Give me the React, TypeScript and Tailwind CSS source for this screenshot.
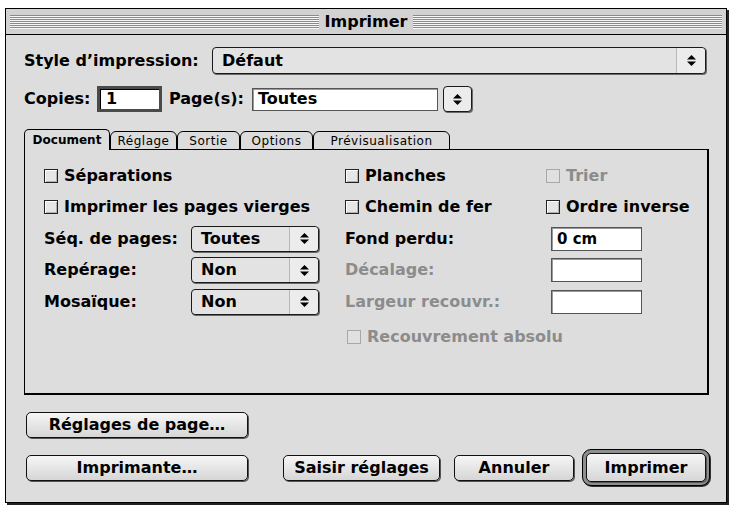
import React from 'react';

function Arrows() {
  return (
    <svg width="9" height="13" viewBox="0 0 9 13">
      <polygon points="0,5.5 4.5,1 9,5.5" fill="#000" />
      <polygon points="0,7.5 4.5,12 9,7.5" fill="#000" />
    </svg>
  );
}

function Stripes() {
  return (
    <div className="flex-1 flex flex-col gap-[1px]">
      {[0, 1, 2, 3, 4, 5, 6].map((i) => (
        <div key={i} className="h-px bg-[#8a8a8a] shadow-[0_1px_0_#f8f8f8]" />
      ))}
    </div>
  );
}

function Popup({ label, className }: { label: string; className: string }) {
  return (
    <div className={`flex rounded-[4px] border border-[#1a1a1a] bg-[#e3e3e3] shadow-[1px_1px_0_#6a6a6a] ${className}`}>
      <div className="flex-1 flex items-center pl-[9px] text-[16px] font-bold">{label}</div>
      <div className="w-[29px] flex items-center justify-center border-l border-[#b8b8b8] bg-[#ececec] rounded-r-[4px]">
        <Arrows />
      </div>
    </div>
  );
}

function Check({ label, disabled }: { label: string; disabled?: boolean }) {
  return (
    <div className="flex items-center gap-[6px] whitespace-nowrap">
      <div
        className={
          disabled
            ? 'w-[14px] h-[14px] border border-[#a8a8a8] bg-[#e0e0e0]'
            : 'w-[14px] h-[14px] border border-[#222] bg-[#e6e6e6] shadow-[inset_1px_1px_0_#fff,inset_-1px_-1px_0_#b0b0b0]'
        }
      />
      <span className={disabled ? 'text-[16px] font-bold text-[#8c8c8c]' : 'text-[16px] font-bold'}>{label}</span>
    </div>
  );
}

function Field({ value, className }: { value?: string; className: string }) {
  return (
    <div className={`flex items-center pl-[5px] bg-white border border-[#555] shadow-[inset_1px_1px_0_#999] text-[15px] font-bold ${className}`}>
      {value}
    </div>
  );
}

function Btn({ label, className }: { label: string; className: string }) {
  return (
    <div
      className={`h-[26px] flex items-center justify-center rounded-[5px] border border-[#111] bg-linear-to-b from-[#f6f6f6] to-[#d6d6d6] shadow-[1px_1px_0_#555] text-[16px] font-bold ${className}`}
    >
      {label}
    </div>
  );
}

const tabs = [
  { label: 'Réglage', w: 'w-[67px]' },
  { label: 'Sortie', w: 'w-[63px]' },
  { label: 'Options', w: 'w-[73px]' },
  { label: 'Prévisualisation', w: 'w-[137px]' },
];

export default function App() {
  return (
    <div className="w-[734px] h-[509px] bg-white pt-[8px] pl-[5px] font-['DejaVu_Sans',sans-serif] text-black">
      <div className="w-[722px] h-[495px] border border-black bg-[#dddddd] shadow-[2px_2px_0_#222] flex flex-col">
        {/* Title bar */}
        <div className="h-[26px] flex items-center gap-[6px] px-[4px] bg-[#d2d2d2] border-b border-black">
          <Stripes />
          <span className="text-[16px] font-bold leading-none">Imprimer</span>
          <Stripes />
        </div>

        <div className="flex flex-col pl-[18px]">
          {/* Style */}
          <div className="mt-[12px] h-[27px] flex items-center">
            <span className="w-[188px] text-[16px] font-bold">Style d’impression:</span>
            <Popup label="Défaut" className="w-[494px] h-[27px]" />
          </div>

          {/* Copies / Pages */}
          <div className="mt-[12px] h-[26px] flex items-center">
            <span className="w-[73px] text-[16px] font-bold">Copies:</span>
            <div className="w-[65px] h-[26px] flex items-center pl-[6px] bg-white border-[3px] border-[#4a4a4a] shadow-[inset_1px_1px_0_#000] text-[16px] font-bold">
              1
            </div>
            <span className="ml-[7px] w-[83px] text-[16px] font-bold">Page(s):</span>
            <div className="w-[186px] h-[23px] flex items-center pl-[5px] bg-white border border-[#555] shadow-[inset_1px_1px_0_#999] text-[16px] font-bold">
              Toutes
            </div>
            <div className="ml-[5px] w-[29px] h-[26px] flex items-center justify-center rounded-[4px] border border-[#1a1a1a] bg-[#ececec] shadow-[1px_1px_0_#6a6a6a]">
              <Arrows />
            </div>
          </div>

          {/* Tabs */}
          <div className="mt-[18px] h-[20px] flex items-end -mb-px relative z-10">
            <div className="w-[86px] h-[21px] flex items-center justify-center rounded-t-[5px] border-t border-l border-r border-black bg-[#dddddd] text-[12px] font-bold">
              Document
            </div>
            {tabs.map((t) => (
              <div
                key={t.label}
                className={`${t.w} h-[19px] flex items-center justify-center rounded-t-[6px] border border-black bg-[#dcdcdc] text-[12px] tracking-[0.5px]`}
              >
                {t.label}
              </div>
            ))}
          </div>

          {/* Panel */}
          <div className="w-[685px] h-[246px] border border-black border-r-2 border-b-2 pt-[10px] pl-[19px]">
            <div className="grid grid-cols-[301px_201px_1fr] auto-rows-[31.5px] items-center">
              <Check label="Séparations" />
              <Check label="Planches" />
              <Check label="Trier" disabled />

              <Check label="Imprimer les pages vierges" />
              <Check label="Chemin de fer" />
              <Check label="Ordre inverse" />

              <div className="flex items-center">
                <span className="w-[147px] text-[16px] font-bold">Séq. de pages:</span>
                <Popup label="Toutes" className="w-[128px] h-[26px]" />
              </div>
              <span className="text-[16px] font-bold">Fond perdu:</span>
              <Field value="0 cm" className="ml-[5px] w-[91px] h-[24px]" />

              <div className="flex items-center">
                <span className="w-[147px] text-[16px] font-bold">Repérage:</span>
                <Popup label="Non" className="w-[128px] h-[26px]" />
              </div>
              <span className="text-[16px] font-bold text-[#8c8c8c] whitespace-nowrap">Décalage:</span>
              <Field className="ml-[5px] w-[91px] h-[24px]" />

              <div className="flex items-center">
                <span className="w-[147px] text-[16px] font-bold">Mosaïque:</span>
                <Popup label="Non" className="w-[128px] h-[26px]" />
              </div>
              <span className="text-[16px] font-bold text-[#8c8c8c] whitespace-nowrap">Largeur recouvr.:</span>
              <Field className="ml-[5px] w-[91px] h-[24px]" />

              <div />
              <div className="col-span-2 mt-[7px] pl-[2px]">
                <Check label="Recouvrement absolu" disabled />
              </div>
            </div>
          </div>

          {/* Buttons */}
          <div className="mt-[17px] flex items-center">
            <Btn label="Réglages de page…" className="ml-[2px] w-[222px]" />
          </div>
          <div className="mt-[11px] h-[37px] flex items-center">
            <Btn label="Imprimante…" className="ml-[2px] w-[222px]" />
            <Btn label="Saisir réglages" className="ml-[35px] w-[157px]" />
            <Btn label="Annuler" className="ml-[14px] w-[120px]" />
            <div className="ml-[8px] w-[128px] h-[37px] p-[3px] rounded-[9px] border border-black bg-[#8e8e8e] shadow-[1px_1px_0_#333]">
              <Btn label="Imprimer" className="w-full h-[29px]" />
            </div>
          </div>
        </div>
      </div>
    </div>
  );
}
